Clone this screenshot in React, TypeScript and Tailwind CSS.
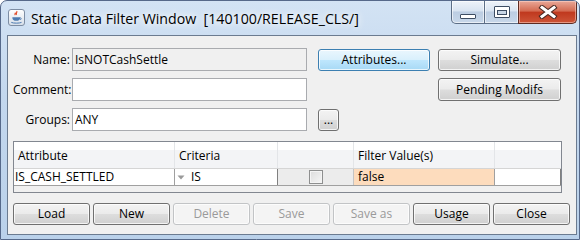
function JavaIcon() {
  return (
    <svg width="17" height="17" viewBox="0 0 17 17">
      <defs>
        <linearGradient id="jbg" x1="0" y1="0" x2="0" y2="1">
          <stop offset="0" stopColor="#ffffff" />
          <stop offset="1" stopColor="#d6dee8" />
        </linearGradient>
      </defs>
      <rect x="0.5" y="0.5" width="16" height="16" rx="2.5" fill="url(#jbg)" stroke="#7d8da3" />
      <path d="M8.6 2.2c1.4 1.2-1.6 2.2 0 3.6M7 3.6c0.9 0.8-0.9 1.4 0.3 2.4" stroke="#e0401c" strokeWidth="1.1" fill="none" />
      <path d="M4.3 8.2c0 2.6 1.6 3.6 4 3.6s4-1 4-3.6z" fill="#4d7bb1" />
      <path d="M12.2 8.8c1.4 0 1.4 1.8 0 1.8" stroke="#4d7bb1" strokeWidth="0.9" fill="none" />
      <path d="M3.3 13.4c2 1 8.2 1 10.2 0" stroke="#4d7bb1" strokeWidth="1" fill="none" />
    </svg>
  )
}

function WinButton({ label, width, disabled, hot }: { label: string; width: string; disabled?: boolean; hot?: boolean }) {
  let cls = 'border-[#707070] bg-[linear-gradient(180deg,#f3f3f3_0%,#ebebeb_48%,#dddddd_52%,#d0d0d0_100%)] text-black'
  if (hot) cls = 'border-[#3c7fb1] bg-[linear-gradient(180deg,#eaf6fd_0%,#d9f0fc_48%,#bee6fd_52%,#a7d9f5_100%)] text-black'
  if (disabled) cls = 'border-[#c2c4c6] bg-[#f4f4f4] text-[#9a9a9a]'
  return (
    <div className={`${width} flex items-center justify-center rounded-[3px] border shadow-[inset_0_0_0_1px_rgba(255,255,255,0.75)] ${cls}`}>
      {label}
    </div>
  )
}

function Field({ value, readOnly }: { value?: string; readOnly?: boolean }) {
  return (
    <div className={`w-[235px] h-[23px] border border-[#a9abaf] flex items-center pl-[2px] ${readOnly ? 'bg-[#f0f0f0]' : 'bg-white'}`}>
      {value}
    </div>
  )
}

export default function App() {
  return (
    <div className="w-[580px] h-[240px] overflow-hidden rounded-t-[7px] border border-[#56698a] bg-[linear-gradient(180deg,#d3e3f4_0%,#c3d7ee_40%,#bad1ea_100%)] flex flex-col font-['Open_Sans',sans-serif] text-[12px] text-black">
      {/* title bar */}
      <div className="h-[34px] flex items-start">
        <div className="ml-[7px] mt-[8px]">
          <JavaIcon />
        </div>
        <div className="ml-[6px] mt-[8px] text-[14.2px] leading-[20px] whitespace-pre [text-shadow:0_0_6px_#ffffff,0_0_10px_#ffffff]">
          Static Data Filter Window  [140100/RELEASE_CLS/]
        </div>
        <div className="ml-auto mr-[2px] flex h-[23px]">
          <div className="w-[34px] border border-t-0 border-[#5c6e86] rounded-bl-[5px] bg-[linear-gradient(180deg,#eef3f9_0%,#d9e4f1_45%,#bccde2_50%,#c8d8ea_100%)] flex items-end justify-center pb-[4px] shadow-[inset_0_0_0_1px_rgba(255,255,255,0.6)]">
            <div className="w-[16px] h-[5px] bg-white border border-[#3d4d63] rounded-[1px]" />
          </div>
          <div className="w-[33px] border-b border-[#5c6e86] bg-[linear-gradient(180deg,#eef3f9_0%,#d9e4f1_45%,#bccde2_50%,#c8d8ea_100%)] flex items-center justify-center shadow-[inset_0_0_0_1px_rgba(255,255,255,0.6)]">
            <div className="w-[16px] h-[12px] border border-[#3d4d63] bg-white p-[2px] pt-[3px] rounded-[1px]">
              <div className="w-full h-full border border-[#3d4d63] bg-[#c8d6e6]" />
            </div>
          </div>
          <div className="w-[59px] border border-t-0 border-[#5e2b22] rounded-br-[5px] bg-[linear-gradient(180deg,#e9a898_0%,#d46b52_45%,#c0391f_52%,#cd5538_100%)] flex items-center justify-center shadow-[inset_0_0_0_1px_rgba(255,220,210,0.5)]">
            <svg width="20" height="14" viewBox="0 0 20 14">
              <path d="M4 2.5L16 11.5M16 2.5L4 11.5" stroke="#4a2a24" strokeWidth="5" strokeLinecap="square" />
              <path d="M4 2.5L16 11.5M16 2.5L4 11.5" stroke="#ffffff" strokeWidth="3" strokeLinecap="square" />
            </svg>
          </div>
        </div>
      </div>

      {/* client area */}
      <div className="ml-[6px] w-[570px] h-[200px] border border-[#6b7b90] bg-[#f0f0f0] flex flex-col pt-[12px] pl-[5px]">
        <div className="flex items-center h-[23px]">
          <div className="w-[59px] text-right pr-[2px]">Name:</div>
          <Field value="IsNOTCashSettle" readOnly />
          <div className="ml-[11px] h-[22px] flex">
            <WinButton label="Attributes..." width="w-[112px]" hot />
          </div>
          <div className="ml-[8px] h-[22px] flex">
            <WinButton label="Simulate..." width="w-[123px]" />
          </div>
        </div>
        <div className="flex items-center h-[23px] mt-[7px]">
          <div className="w-[59px] text-right pr-[1px]">Comment:</div>
          <Field />
          <div className="ml-[131px] h-[23px] flex">
            <WinButton label="Pending Modifs" width="w-[123px]" />
          </div>
        </div>
        <div className="flex items-center h-[23px] mt-[7px]">
          <div className="w-[59px] text-right pr-[2px]">Groups:</div>
          <Field value="ANY" />
          <div className="ml-[11px] h-[22px] flex">
            <WinButton label="..." width="w-[21px]" />
          </div>
        </div>

        {/* table */}
        <div className="mt-[10px] w-[549px] h-[52px] border border-[#828790] flex flex-col">
          <div className="flex h-[27px] bg-[linear-gradient(180deg,#ffffff_0%,#ffffff_30%,#f3f4f6_32%,#f3f4f6_100%)] border-b border-[#d5d5d5]">
            <div className="w-[161px] border-r border-[#e3e5e8] flex items-end pb-[3px] pl-[4px]">Attribute</div>
            <div className="w-[103px] border-r border-[#e3e5e8] flex items-end pb-[3px] pl-[4px]">Criteria</div>
            <div className="w-[76px] border-r border-[#e3e5e8]" />
            <div className="w-[141px] border-r border-[#e3e5e8] flex items-end pb-[3px] pl-[4px]">Filter Value(s)</div>
            <div className="flex-1" />
          </div>
          <div className="flex h-[17px] border-b border-[#a0a0a0] leading-[16px]">
            <div className="w-[161px] bg-white border-r border-[#a0a0a0] pl-[1px]">IS_CASH_SETTLED</div>
            <div className="w-[103px] bg-white border-r border-[#808080] flex items-center pl-[2px]">
              <svg width="8" height="5" viewBox="0 0 8 5" className="mr-[6px]">
                <path d="M0.5 0.5h7L4 4.5z" fill="#9a9a9a" />
              </svg>
              IS
            </div>
            <div className="w-[76px] bg-[#ececec] border-r border-[#c4c4c4] flex items-center justify-center">
              <div className="w-[14px] h-[14px] border border-[#8e8f8f] bg-[linear-gradient(135deg,#dcdcdc_0%,#f6f6f6_100%)] shadow-[inset_0_0_0_1px_#f4f4f4]" />
            </div>
            <div className="w-[141px] bg-[#fddcbd] border-r border-[#a0a0a0] pl-[4px]">false</div>
            <div className="flex-1 bg-white border-r border-[#808080]" />
          </div>
          <div className="flex-1 bg-[#f0f0f0]" />
        </div>

        {/* bottom buttons */}
        <div className="mt-[10px] flex gap-[3px] h-[22px]">
          <WinButton label="Load" width="w-[77px]" />
          <WinButton label="New" width="w-[77px]" />
          <WinButton label="Delete" width="w-[77px]" disabled />
          <WinButton label="Save" width="w-[77px]" disabled />
          <WinButton label="Save as" width="w-[77px]" disabled />
          <WinButton label="Usage" width="w-[77px]" />
          <WinButton label="Close" width="w-[77px]" />
        </div>
      </div>
    </div>
  )
}
